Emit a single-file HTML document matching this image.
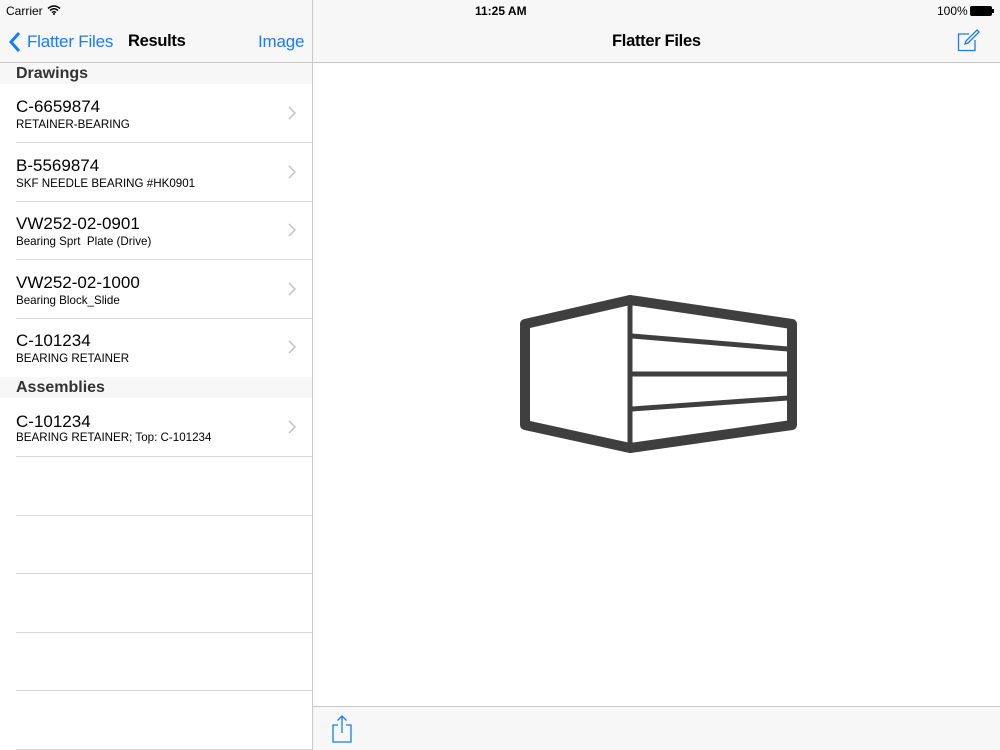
<!DOCTYPE html>
<html><head><meta charset="utf-8"><style>
*{margin:0;padding:0;box-sizing:border-box}
body{width:1000px;height:750px;overflow:hidden;background:#fff;font-family:"Liberation Sans",Helvetica,Arial,sans-serif;position:relative;color:#000}
.bar{position:absolute;top:0;left:0;width:1000px;height:63px;background:#f7f7f7;border-bottom:1px solid #c8c8c8}
.abs{position:absolute;white-space:nowrap}
.split{position:absolute;left:312px;top:0;width:1px;height:750px;background:#c8c8c8}
.hdr{position:absolute;left:0;width:312px;height:21px;background:#f7f7f7;font-size:16px;font-weight:bold;color:#333;padding-left:16px;line-height:21px}
.row{position:absolute;left:0;width:312px;height:59px}
.row .sep{position:absolute;left:16px;right:0;bottom:0;height:1px;background:#d9d9d9}
.t{position:absolute;left:16px;top:13px;font-size:17px}
.s{position:absolute;left:16px;top:34px;font-size:11.6px}
.chev{position:absolute;right:16px;top:22px}
.tb{position:absolute;left:313px;top:706px;width:687px;height:44px;background:#f7f7f7;border-top:1px solid #c8c8c8}
</style></head><body>
<div class="bar"></div>
<div class="abs" style="left:6px;top:4px;font-size:12px">Carrier</div>
<svg class="abs" style="left:47px;top:5px" width="14" height="10" viewBox="0 0 14 10"><path d="M1 3.5Q7 -1.5 13 3.5M3 5.5Q7 2 11 5.5M5 7.5Q7 6 9 7.5" stroke="#000" stroke-width="1.5" fill="none"/><circle cx="7" cy="9" r="1" fill="#000"/></svg>
<div class="abs" style="left:475px;top:4px;font-size:12px;font-weight:bold">11:25 AM</div>
<div class="abs" style="left:937px;top:4px;font-size:12px">100%</div>
<div class="abs" style="left:970px;top:6px;width:22px;height:10px;background:#000;border-radius:2px"></div>
<div class="abs" style="left:992px;top:9px;width:2px;height:4px;background:#000"></div>
<svg class="abs" style="left:8px;top:31px" width="14" height="22" viewBox="0 0 14 22"><path d="M11 2L3 11L11 20" stroke="#1a7cf5" stroke-width="3" fill="none"/></svg>
<div class="abs" style="left:27px;top:32px;font-size:17px;color:#1a7cf5;letter-spacing:-0.2px">Flatter Files</div>
<div class="abs" style="left:128px;top:32px;font-size:16.5px;font-weight:bold;letter-spacing:-0.3px">Results</div>
<div class="abs" style="left:258px;top:32px;font-size:17px;color:#1a7cf5;letter-spacing:-0.2px">Image</div>
<div class="abs" style="left:612px;top:32px;font-size:16.5px;font-weight:bold;letter-spacing:-0.3px">Flatter Files</div>
<svg class="abs" style="left:956px;top:28px" width="26" height="24" viewBox="0 0 26 24"><path d="M13 6H2.5V22.5H19V12" stroke="#1a7cf5" stroke-width="1.3" fill="none"/><path d="M9 16L10 13L21 2L23 4L12 15Z" stroke="#1a7cf5" stroke-width="1.3" fill="none"/></svg>
<div class="split"></div>
<div class="hdr" style="top:63px">Drawings</div>
<div class="row" style="top:84px"><div class="t">C-6659874</div><div class="s">RETAINER-BEARING</div><svg class="chev" width="8" height="14"><path d="M1 1L7 7L1 13" stroke="#c7c7cc" stroke-width="1.6" fill="none"/></svg><div class="sep"></div></div>
<div class="row" style="top:143px"><div class="t">B-5569874</div><div class="s">SKF NEEDLE BEARING #HK0901</div><svg class="chev" width="8" height="14"><path d="M1 1L7 7L1 13" stroke="#c7c7cc" stroke-width="1.6" fill="none"/></svg><div class="sep"></div></div>
<div class="row" style="top:201px"><div class="t">VW252-02-0901</div><div class="s">Bearing Sprt&nbsp; Plate (Drive)</div><svg class="chev" width="8" height="14"><path d="M1 1L7 7L1 13" stroke="#c7c7cc" stroke-width="1.6" fill="none"/></svg><div class="sep"></div></div>
<div class="row" style="top:260px"><div class="t">VW252-02-1000</div><div class="s">Bearing Block_Slide</div><svg class="chev" width="8" height="14"><path d="M1 1L7 7L1 13" stroke="#c7c7cc" stroke-width="1.6" fill="none"/></svg><div class="sep"></div></div>
<div class="row" style="top:318px;height:59px"><div class="t">C-101234</div><div class="s">BEARING RETAINER</div><svg class="chev" width="8" height="14"><path d="M1 1L7 7L1 13" stroke="#c7c7cc" stroke-width="1.6" fill="none"/></svg></div>
<div class="hdr" style="top:377px">Assemblies</div>
<div class="row" style="top:398px"><div class="t" style="top:14px">C-101234</div><div class="s" style="top:33px">BEARING RETAINER; Top: C-101234</div><svg class="chev" width="8" height="14" style="top:22px"><path d="M1 1L7 7L1 13" stroke="#c7c7cc" stroke-width="1.6" fill="none"/></svg><div class="sep"></div></div>
<div class="row" style="top:457px"><div class="sep"></div></div>
<div class="row" style="top:515px"><div class="sep"></div></div>
<div class="row" style="top:574px"><div class="sep"></div></div>
<div class="row" style="top:632px"><div class="sep"></div></div>
<div class="row" style="top:691px"><div class="sep"></div></div>
<svg class="abs" style="left:0;top:0" width="1000" height="750" viewBox="0 0 1000 750">
<path d="M525 324L630 300L792 324L792 425L630 448L525 425Z" stroke="#3f3f3f" stroke-width="10" fill="none" stroke-linejoin="round"/>
<path d="M630 302V446" stroke="#3f3f3f" stroke-width="5"/>
<path d="M632 336L788 349M632 374H788M632 409L788 398" stroke="#3f3f3f" stroke-width="5"/>
</svg>
<div class="tb"></div>
<svg class="abs" style="left:331px;top:714px" width="22" height="30" viewBox="0 0 22 30"><path d="M7 11H2V28H20V11H15" stroke="#1a7cf5" stroke-width="1.3" fill="none"/><path d="M11 2V19M6.5 6.5L11 2L15.5 6.5" stroke="#1a7cf5" stroke-width="1.3" fill="none"/></svg>
</body></html>
